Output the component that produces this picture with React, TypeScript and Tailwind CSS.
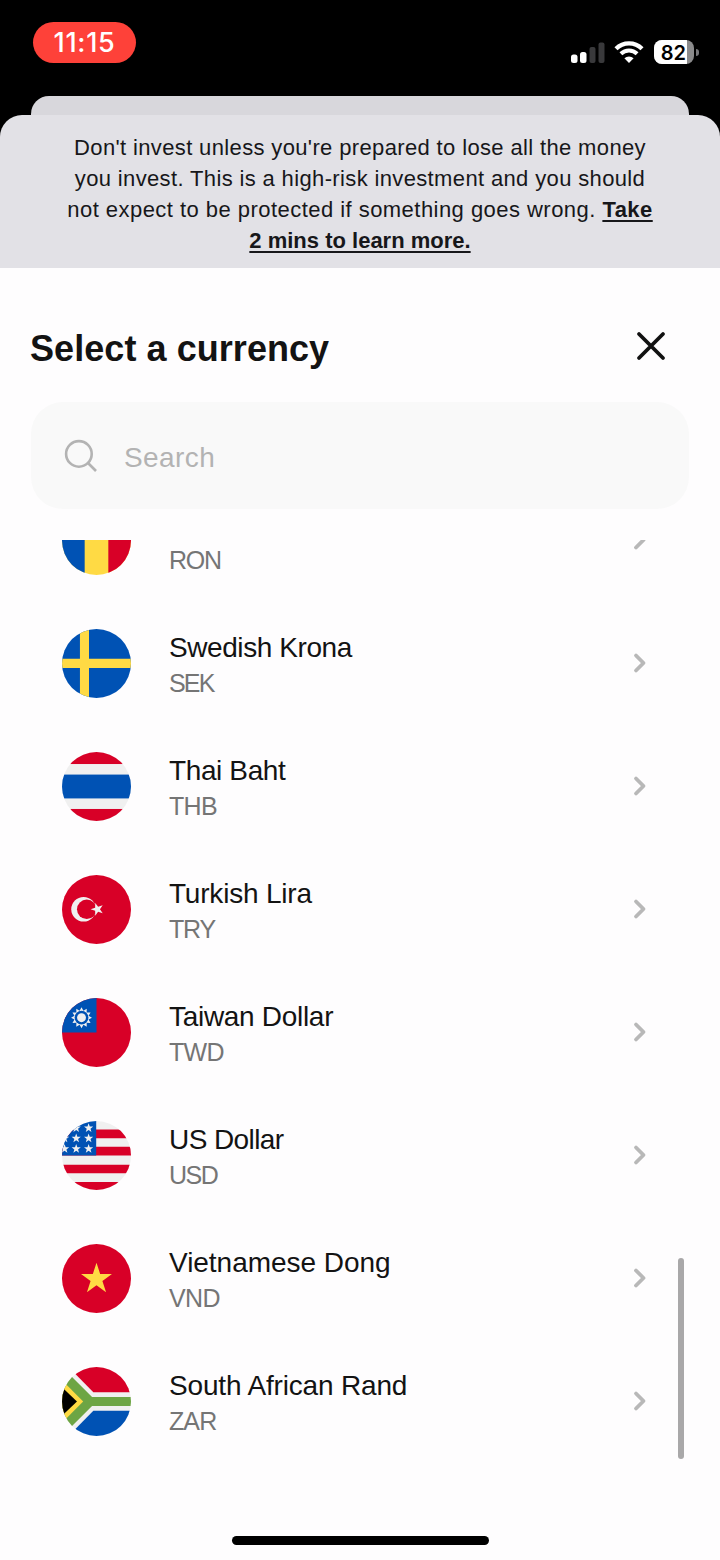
import type { ReactNode } from "react"

const BLUE = "#0052b4"
const RED = "#d80027"
const YELLOW = "#ffda44"
const WHITE = "#f0f0f0"

function starPoints(cx: number, cy: number, outer: number, inner: number, tips = 5, turn = -90) {
  const points: string[] = []
  for (let i = 0; i < tips * 2; i++) {
    const r = i % 2 === 0 ? outer : inner
    const a = ((turn + (i * 180) / tips) * Math.PI) / 180
    points.push(`${(cx + r * Math.cos(a)).toFixed(2)},${(cy + r * Math.sin(a)).toFixed(2)}`)
  }
  return points.join(" ")
}

const FLAGS: Record<string, ReactNode> = {
  RON: (
    <>
      <rect width="70" height="70" fill={YELLOW} />
      <rect width="23" height="70" fill={BLUE} />
      <rect x="47" width="23" height="70" fill={RED} />
    </>
  ),
  SEK: (
    <>
      <rect width="70" height="70" fill={BLUE} />
      <path d="M22.8 0V70M0 34.9H70" stroke={YELLOW} strokeWidth="9.2" />
    </>
  ),
  THB: (
    <>
      <rect width="70" height="70" fill={WHITE} />
      <rect width="70" height="12.2" fill={RED} />
      <rect y="22.9" width="70" height="24.2" fill={BLUE} />
      <rect y="57.8" width="70" height="12.2" fill={RED} />
    </>
  ),
  TRY: (
    <>
      <rect width="70" height="70" fill={RED} />
      <circle cx="21.9" cy="34.8" r="12.5" fill={WHITE} />
      <circle cx="25.1" cy="34.8" r="9.9" fill={RED} />
      <polygon points={starPoints(35.8, 34.8, 6.8, 2.7, 5, -180)} fill={WHITE} />
    </>
  ),
  TWD: (
    <>
      <rect width="70" height="70" fill={RED} />
      <rect width="35" height="35" fill={BLUE} />
      <polygon points={starPoints(19.8, 20, 10.6, 7.4, 12)} fill={WHITE} />
      <circle cx="19.8" cy="20" r="7" fill={BLUE} />
      <circle cx="19.8" cy="20" r="4.5" fill={WHITE} />
    </>
  ),
  USD: (
    <>
      <rect width="70" height="70" fill={WHITE} />
      <path d="M0 8.5H70V17.5H0zM0 26H70V35H0zM0 44.3H70V53H0zM0 61.8H70V70H0z" fill={RED} />
      <rect width="34.7" height="35" fill={BLUE} />
      {[
        [14.4, 7.2],
        [27, 7.2],
        [2.6, 17.6],
        [14.4, 17.6],
        [27, 17.6],
        [2.6, 28.2],
        [14.4, 28.2],
        [27, 28.2],
      ].map(([x, y]) => (
        <polygon key={`${x}-${y}`} points={starPoints(x, y, 4.9, 2)} fill={WHITE} />
      ))}
    </>
  ),
  VND: (
    <>
      <rect width="70" height="70" fill={RED} />
      <polygon points={starPoints(35, 35.5, 16.5, 6.3)} fill={YELLOW} />
    </>
  ),
  ZAR: (
    <>
      <rect width="70" height="70" fill={WHITE} />
      <path d="M6.6 0L31.8 25.5H70V0z" fill={RED} />
      <path d="M6.6 70L31.8 44.5H70V70z" fill={BLUE} />
      <path d="M0 0L30.5 30.5H70V39.5H30.5L0 70z" fill="#6da544" />
      <path d="M0 13.5L21.5 35L0 56.5z" fill={YELLOW} />
      <path d="M0 20.5L15.2 35L0 49.5z" fill="#000" />
    </>
  ),
}

// The first row is scrolled half out of view, only its code is visible
const CURRENCIES = [
  { code: "RON", name: "", tracking: "", codeTracking: "tracking-[-1.3px]" },
  { code: "SEK", name: "Swedish Krona", tracking: "tracking-[-0.42px]", codeTracking: "tracking-[-1.8px]" },
  { code: "THB", name: "Thai Baht", tracking: "tracking-[-0.38px]", codeTracking: "tracking-[-0.7px]" },
  { code: "TRY", name: "Turkish Lira", tracking: "tracking-[-0.2px]", codeTracking: "tracking-[-1.2px]" },
  { code: "TWD", name: "Taiwan Dollar", tracking: "tracking-[-0.3px]", codeTracking: "tracking-[-0.7px]" },
  { code: "USD", name: "US Dollar", tracking: "tracking-[-0.58px]", codeTracking: "tracking-[-1.5px]" },
  { code: "VND", name: "Vietnamese Dong", tracking: "tracking-[-0.03px]", codeTracking: "tracking-[-0.6px]" },
  { code: "ZAR", name: "South African Rand", tracking: "tracking-[-0.17px]", codeTracking: "tracking-[-0.9px]" },
]

function StatusBar() {
  return (
    <div className="flex h-24 items-start justify-between pl-[33px] pr-[21px] pt-[22px]">
      <div className="flex h-[41px] w-[103px] items-center justify-center rounded-full bg-[#fe4139] pt-0.5 font-['Inter'] text-[27px] font-medium tracking-[0.7px] text-white">
        11:15
      </div>
      <div className="mt-[18px] flex items-center">
        <svg width="34" height="24" viewBox="0 0 34 24">
          <rect x="0" y="14.5" width="6.5" height="8.5" rx="2.5" fill="#fff" />
          <rect x="9" y="12" width="6.5" height="11" rx="2.5" fill="#fff" />
          <rect x="18.5" y="7" width="6" height="16" rx="2" fill="#39393b" />
          <rect x="27.5" y="2.5" width="6" height="20.5" rx="2" fill="#39393b" />
        </svg>
        <svg className="ml-[9px]" width="30" height="24" viewBox="0 0 30 24">
          <path d="M2 8.7a18.6 18.6 0 0 1 26 0" fill="none" stroke="#fff" strokeWidth="4.4" />
          <path d="M6.9 13.8a11.6 11.6 0 0 1 16.2 0" fill="none" stroke="#fff" strokeWidth="4" />
          <path d="M15 23l-4.6-4.7a6.5 6.5 0 0 1 9.2 0z" fill="#fff" />
        </svg>
        <div className="ml-[10px] flex h-6 w-10 items-center overflow-hidden rounded-[8px] bg-[#8b8b8c]">
          <div className="flex h-full w-[33px] items-center justify-end bg-white pr-px pt-px font-['Inter'] text-[20px] font-semibold text-black">
            82
          </div>
        </div>
        <div className="ml-[2px] h-[7px] w-[3px] rounded-r-full bg-[#77777a]" />
      </div>
    </div>
  )
}

function RiskBanner() {
  return (
    <div className="h-[153px] rounded-t-[22px] bg-[#e2e1e6] pt-[17px] text-center text-[22px] leading-[31px] text-[#17171a]">
      <p className="tracking-[0.36px]">Don't invest unless you're prepared to lose all the money</p>
      <p className="tracking-[0.36px]">you invest. This is a high-risk investment and you should</p>
      <p className="tracking-[0.46px]">
        not expect to be protected if something goes wrong.{" "}
        <a className="font-bold underline decoration-2 underline-offset-3">Take</a>
      </p>
      <p>
        <a className="font-bold underline decoration-2 underline-offset-3">2 mins to learn more.</a>
      </p>
    </div>
  )
}

function CurrencyRow({ code, name, tracking, codeTracking }: (typeof CURRENCIES)[number]) {
  return (
    <li className="flex h-[123px] shrink-0 items-center pl-[61.5px] pr-[73px]">
      <svg className="mb-px size-[69px] rounded-full" viewBox="0 0 70 70">
        {FLAGS[code]}
      </svg>
      <div className="ml-[38.5px] flex-1 pt-1">
        <p className={`h-9 text-[28px] leading-9 text-[#131313] ${tracking}`}>{name}</p>
        <p className={`text-[25px] leading-[35px] text-[#757575] ${codeTracking}`}>{code}</p>
      </div>
      <svg className="mb-px" width="14" height="22" viewBox="0 0 14 22">
        <path
          d="M3 3.5L10.5 11L3 18.5"
          fill="none"
          stroke="#b8b8b8"
          strokeWidth="3.8"
          strokeLinecap="round"
          strokeLinejoin="round"
        />
      </svg>
    </li>
  )
}

export default function App() {
  return (
    <div className="relative flex h-[1560px] w-[720px] flex-col overflow-hidden bg-black font-['Liberation_Sans',sans-serif]">
      <StatusBar />
      {/* Edge of the sheet underneath */}
      <div className="mx-[31px] h-[19px] rounded-t-[18px] bg-[#d8d7dc]" />
      <RiskBanner />

      <div className="flex min-h-0 flex-1 flex-col bg-[#fefdfe]">
        <div className="flex h-[134px] items-center justify-between pl-[30px] pr-[53px] pt-[22px]">
          <h1 className="pt-[5px] text-[36px] font-bold leading-[48px] tracking-[0.06px] text-[#131313]">Select a currency</h1>
          <svg width="32" height="32" viewBox="0 0 32 32">
            <path d="M4 4L28 28M28 4L4 28" stroke="#111" strokeWidth="3.8" strokeLinecap="round" />
          </svg>
        </div>

        <div className="mx-[31px] flex h-[107px] shrink-0 items-center rounded-[32px] bg-[#f9f9f9] pl-[33px]">
          <svg width="34" height="34" viewBox="0 0 34 34" fill="none" stroke="#b3b3b3" strokeWidth="2.6">
            <circle cx="14.9" cy="14.9" r="12.8" />
            <path d="M24 24L32 32" />
          </svg>
          <span className="ml-[26px] pt-1 text-[28px] tracking-[0.4px] text-[#b3b3b3]">Search</span>
        </div>

        <div className="mt-[31px] min-h-0 flex-1 overflow-hidden">
          <ul className="-mt-[61px] flex flex-col">
            {CURRENCIES.map((currency) => (
              <CurrencyRow key={currency.code} {...currency} />
            ))}
          </ul>
        </div>
      </div>

      {/* Scroll thumb and home indicator */}
      <div className="absolute left-[678px] top-[1258px] h-[201px] w-[6px] rounded-full bg-[#a9a8a9]" />
      <div className="absolute bottom-[15px] left-[232px] h-[9px] w-[257px] rounded-full bg-black" />
    </div>
  )
}
